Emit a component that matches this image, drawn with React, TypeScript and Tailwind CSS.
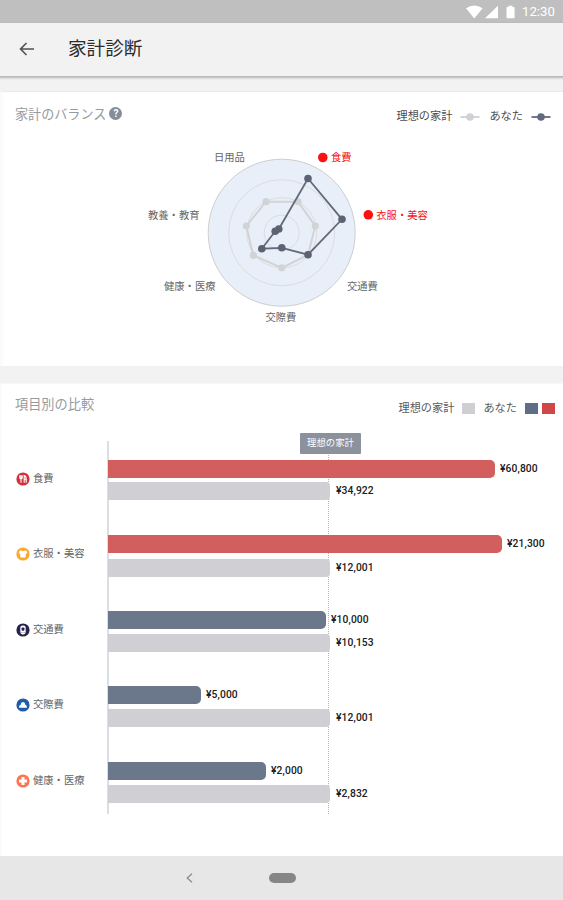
import type { ReactNode } from "react";

type Row = {
  label: string;
  icon: ReactNode;
  yours: string;
  ideal: string;
  yourBar: string;
  rowClass: string;
  idealGap: string;
};

const ring = (color: string, inner: ReactNode) => (
  <svg viewBox="0 0 14 14" className="h-[14px] w-[14px] shrink-0">
    <circle cx="7" cy="7" r="6.6" fill={color} />
    {inner}
  </svg>
);

const rows: Row[] = [
  {
    label: "食費",
    icon: ring(
      "#d3303c",
      <g stroke="#fff" fill="none">
        <path d="M3.800 3.300v2.400q0 1.200 1.200 1.200t1.200-1.200V3.300M5 3.300v7.400" strokeWidth="1.100" />
        <path d="M8.200 10.700V3.500q2 .3 2 3.800v3.400M8.200 7.300h2" strokeWidth="1.100" />
      </g>,
    ),
    yours: "¥60,800",
    ideal: "¥34,922",
    yourBar: "w-[387px] bg-[#d25e5e]",
    rowClass: "mt-[19px] h-[75px]",
    idealGap: "mt-1",
  },
  {
    label: "衣服・美容",
    icon: ring(
      "#f9a92f",
      <path d="M3.500 3.700 5.300 3.400Q7 4.600 8.700 3.400L10.500 3.700 11.300 6 9.900 6.800 9.600 10.600H4.400L4.100 6.800 2.700 6z" fill="#fff" />,
    ),
    yours: "¥21,300",
    ideal: "¥12,001",
    yourBar: "w-[394px] bg-[#d25e5e]",
    rowClass: "h-[76px]",
    idealGap: "mt-1.5",
  },
  {
    label: "交通費",
    icon: ring(
      "#25224d",
      <g>
        <rect x="4.300" y="2.400" width="5.400" height="9" rx="2.300" fill="#fff" />
        <rect x="5.600" y="4.500" width="2.800" height="3.300" rx=".8" fill="#25224d" />
        <path d="M5.500 9.500h.8M7.700 9.500h.8" stroke="#25224d" strokeWidth=".7" />
      </g>,
    ),
    yours: "¥10,000",
    ideal: "¥10,153",
    yourBar: "w-[218px] bg-[#6b778b]",
    rowClass: "h-[75px]",
    idealGap: "mt-[5px]",
  },
  {
    label: "交際費",
    icon: ring(
      "#205ca8",
      <path d="M3 9.700q-.2-2.600 1.700-3 .1-2.600 2.300-2.700 2.200.1 2.300 2.700 1.900.4 1.700 3z" fill="#fff" />,
    ),
    yours: "¥5,000",
    ideal: "¥12,001",
    yourBar: "w-[93px] bg-[#6b778b]",
    rowClass: "h-[76px]",
    idealGap: "mt-[5px]",
  },
  {
    label: "健康・医療",
    icon: ring("#fb7550", <path d="M7 3v8M3 7h8" stroke="#fff" strokeWidth="3" />),
    yours: "¥2,000",
    ideal: "¥2,832",
    yourBar: "w-[158px] bg-[#6b778b]",
    rowClass: "h-[52px]",
    idealGap: "mt-[5px]",
  },
];

const yourPoints = [
  [308, 178.5],
  [342, 219.3],
  [308, 254.7],
  [281.8, 247.8],
  [261.8, 248.7],
  [275.2, 231.3],
  [278.8, 229],
];
const idealPoints = [
  [266, 201.7],
  [298, 201.7],
  [315.3, 226],
  [308, 254.7],
  [281.8, 267.8],
  [253.3, 255.3],
  [246.3, 226],
];

const labels: [string, number, number][] = [
  ["日用品", 214, 161],
  ["教養・教育", 148, 218.5],
  ["健康・医療", 164, 290],
  ["交際費", 265.5, 321],
  ["交通費", 347, 290],
];

function Radar() {
  return (
    <svg viewBox="0 140 563 190" className="block h-[190px] w-[563px]">
      <circle cx="281.7" cy="232.7" r="73.5" fill="#e9eff8" stroke="#cdced0" />
      {[53, 35, 17.5].map((r) => (
        <circle key={r} cx="281.7" cy="232.7" r={r} fill="none" stroke="#d9dde2" />
      ))}
      <polygon points={idealPoints.join(" ")} fill="none" stroke="#d2d3d5" strokeWidth="2" />
      {idealPoints.map(([x, y]) => (
        <circle key={`${x}`} cx={x} cy={y} r="3.6" fill="#d2d3d5" />
      ))}
      <polygon points={yourPoints.join(" ")} fill="none" stroke="#646b78" strokeWidth="1.8" />
      {yourPoints.map(([x, y], i) => (
        <circle key={i} cx={x} cy={y} r="3.8" fill="#5c6473" />
      ))}
      <g fontSize="10.3" fill="#666">
        {labels.map(([text, x, y]) => (
          <text key={text} x={x} y={y}>
            {text}
          </text>
        ))}
      </g>
      <g fill="#fc1010" fontSize="10.3">
        <circle cx="322.8" cy="157.5" r="4.8" />
        <text x="331" y="161">食費</text>
        <circle cx="368.3" cy="214.8" r="4.8" />
        <text x="376.3" y="218.5">衣服・美容</text>
      </g>
    </svg>
  );
}

function LineKey({ className }: { className: string }) {
  return (
    <svg viewBox="0 0 20 10" className={`h-[10px] w-5 ${className}`}>
      <path d="M0.5 5h19" stroke="currentColor" strokeWidth="1.8" />
      <circle cx="10" cy="5" r="3.8" fill="currentColor" />
    </svg>
  );
}

export default function App() {
  return (
    <div className="flex h-[900px] w-[563px] flex-col overflow-hidden bg-[#f2f2f2] font-['Noto_Sans_CJK_JP',sans-serif]">
      <div className="flex h-[23px] shrink-0 items-center justify-end bg-[#bfbfbf] pr-[7px] text-white">
        <svg viewBox="0 0 50 14" className="h-[14px] w-[50px]">
          <path d="M0 3.200Q8.300-2.200 16.600 3.200L8.300 13.500z" fill="#fff" />
          <path d="M19 13.300 32 .7v12.600z" fill="#fff" />
          <path d="M42.500 .7h4v1.300h1.300q.8 0 .8.8v9.700q0 .8-.8.8h-6.500q-.8 0-.8-.8V2.800q0-.8.800-.8h1.200z" fill="#fff" />
        </svg>
        <span className="ml-[6px] w-[34px] font-[Roboto,sans-serif] text-[13.2px] leading-none whitespace-nowrap">12:30</span>
      </div>

      <header className="flex h-[53px] shrink-0 items-center bg-[#f2f2f2] shadow-[0_1px_2px_1px_#b4b4b4]">
        <svg viewBox="0 0 16 14" className="mb-[2px] ml-[19px] h-[14px] w-4">
          <path d="M15 7H1.500M7.500 1 1.500 7l6 6" fill="none" stroke="#515151" strokeWidth="1.600" />
        </svg>
        <h1 className="ml-[33px] pb-[5px] text-[18.6px] leading-none text-[#2c2c2c]">家計診断</h1>
      </header>

      <section className="mt-[15px] h-[275px] shrink-0 border-t border-l-[3px] border-t-[#ebebeb] border-l-[#fbfbfb] bg-white">
        <div className="flex h-[48px] items-center justify-between pr-[12px] pl-3">
          <div className="flex items-center pb-[5px] text-[13.1px] leading-none text-[#969a9f]">
            家計のバランス
            <span className="ml-[3px] flex h-[13px] w-[13px] items-center justify-center rounded-full bg-[#868c99] font-[Roboto,sans-serif] text-[10px] font-bold text-white">
              ?
            </span>
          </div>
          <div className="flex items-center text-[11.2px] leading-none text-[#4d4d4d]">
            理想の家計
            <LineKey className="mt-[2px] ml-2 text-[#d0d1d4]" />
            <span className="ml-[9px]">あなた</span>
            <LineKey className="mt-[2px] ml-2 text-[#626a7d]" />
          </div>
        </div>
        <div className="-ml-[3px]">
          <Radar />
        </div>
      </section>

      <section className="mt-[17px] h-[473px] shrink-0 border-t border-l-[2px] border-t-[#f8f8f8] border-l-[#fbfbfb] bg-white">
        <div className="flex h-[48px] items-center justify-between pr-2 pl-[13px]">
          <h2 className="pb-[8px] text-[13.2px] leading-none text-[#969a9f]">項目別の比較</h2>
          <div className="flex items-center text-[11.2px] leading-none text-[#5a5a5a]">
            理想の家計
            <span className="mt-px ml-2 h-[11px] w-[13px] bg-[#cfcfd2]" />
            <span className="ml-2">あなた</span>
            <span className="mt-px ml-2 h-[11px] w-[13px] bg-[#5f6d87]" />
            <span className="mt-px ml-1 h-[11px] w-[13px] bg-[#d04747]" />
          </div>
        </div>

        <div className="relative mt-[9px] flex h-[373px]">
          <div className="absolute top-[12px] left-[326px] h-[361px] border-l border-dotted border-[#b4b4b8]" />
          <div className="absolute top-[-8px] left-[298px] flex h-[21px] w-[61px] items-center justify-center rounded-[1px] bg-[#8c929d] pb-[1px] text-[9.400px] leading-none text-white">
            理想の家計
          </div>
          <div className="w-[105px] shrink-0">
            {rows.map((row) => (
              <div key={row.label} className={`flex items-start ${row.rowClass}`}>
                <div className="ml-[14px] flex h-[38px] items-center text-[10.300px] leading-none whitespace-nowrap text-[#656565]">
                  {row.icon}
                  <span className="ml-[3px] pb-[1px]">{row.label}</span>
                </div>
              </div>
            ))}
          </div>
          <div className="relative min-w-0 flex-1 border-l-2 border-[#dbdfe4] font-[Roboto,sans-serif] text-[10.300px] leading-none font-medium text-[#202020]">
            {rows.map((row) => (
              <div key={row.label} className={row.rowClass}>
                <div className="flex items-center">
                  <div className={`-ml-[1px] h-[18px] rounded-r-[5px] ${row.yourBar}`} />
                  <span className="ml-[5px] tracking-[0.1px]">{row.yours}</span>
                </div>
                <div className={`flex items-center ${row.idealGap}`}>
                  <div className="-ml-[1px] h-[18px] w-[222px] rounded-r-[4px] bg-[#d0d0d4]" />
                  <span className="ml-[6px] tracking-[0.1px]">{row.ideal}</span>
                </div>
              </div>
            ))}
          </div>
        </div>
      </section>

      <nav className="flex h-[44px] shrink-0 items-center bg-[#e7e7e7]">
        <svg viewBox="0 0 8 10" className="ml-[186px] h-[10px] w-2">
          <path d="M6 .7 1.200 5 6 9.300" fill="none" stroke="#888" strokeWidth="1.200" />
        </svg>
        <div className="ml-[75px] h-[10px] w-[27px] rounded-full bg-[#868686]" />
      </nav>
    </div>
  );
}
